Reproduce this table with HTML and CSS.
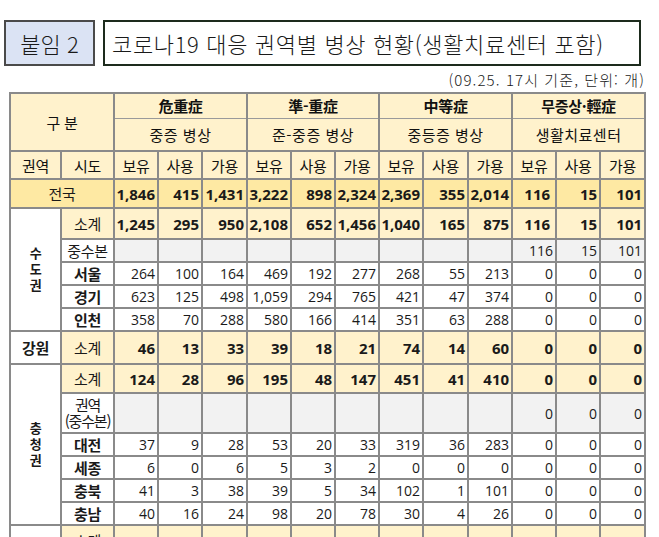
FILE: index.html
```html
<!DOCTYPE html>
<html lang="ko">
<head>
<meta charset="utf-8">
<title>코로나19 대응 권역별 병상 현황</title>
<link rel="stylesheet" href="styles.css">
</head>
<body>
<div class="top">
  <div class="tag">붙임 2</div>
  <div class="title">코로나19 대응 권역별 병상 현황(생활치료센터 포함)</div>
</div>
<div class="unit">(09.25. 17시 기준, 단위: 개)</div>
<table class="beds">
  <colgroup>
    <col class="c-region"><col class="c-sido">
    <col class="c-d"><col class="c-d"><col class="c-d2"><col class="c-d"><col class="c-d"><col class="c-d">
    <col class="c-d"><col class="c-d2"><col class="c-d"><col class="c-d"><col class="c-d"><col class="c-d2">
  </colgroup>
  <thead>
    <tr class="h1">
      <th rowspan="2" colspan="2" class="gubun">구 분</th>
      <th colspan="3" class="hanja">危重症</th>
      <th colspan="3" class="hanja">準-重症</th>
      <th colspan="3" class="hanja">中等症</th>
      <th colspan="3" class="hanja">무증상·輕症</th>
    </tr>
    <tr class="h2">
      <th colspan="3" class="sub">중증 병상</th>
      <th colspan="3" class="sub">준-중증 병상</th>
      <th colspan="3" class="sub">중등증 병상</th>
      <th colspan="3" class="sub">생활치료센터</th>
    </tr>
    <tr class="h3">
      <th>권역</th><th>시도</th>
      <th>보유</th><th>사용</th><th>가용</th>
      <th>보유</th><th>사용</th><th>가용</th>
      <th>보유</th><th>사용</th><th>가용</th>
      <th>보유</th><th>사용</th><th>가용</th>
    </tr>
  </thead>
  <tbody>
    <tr class="total">
      <td colspan="2" class="lbl">전국</td>
      <td>1,846</td><td>415</td><td>1,431</td><td>3,222</td><td>898</td><td>2,324</td><td>2,369</td><td>355</td><td>2,014</td><td class="ctr">116</td><td>15</td><td>101</td>
    </tr>
    <tr class="sum r31">
      <td rowspan="5" class="region"><span class="vert">수<br>도<br>권</span></td>
      <td class="lbl">소계</td>
      <td>1,245</td><td>295</td><td>950</td><td>2,108</td><td>652</td><td>1,456</td><td>1,040</td><td>165</td><td>875</td><td class="ctr">116</td><td>15</td><td>101</td>
    </tr>
    <tr class="hq r23">
      <td class="lbl plain">중수본</td>
      <td></td><td></td><td></td><td></td><td></td><td></td><td></td><td></td><td></td><td>116</td><td>15</td><td>101</td>
    </tr>
    <tr class="city r22">
      <td class="lbl">서울</td>
      <td>264</td><td>100</td><td>164</td><td>469</td><td>192</td><td>277</td><td>268</td><td>55</td><td>213</td><td>0</td><td>0</td><td>0</td>
    </tr>
    <tr class="city r23">
      <td class="lbl">경기</td>
      <td>623</td><td>125</td><td>498</td><td>1,059</td><td>294</td><td>765</td><td>421</td><td>47</td><td>374</td><td>0</td><td>0</td><td>0</td>
    </tr>
    <tr class="city r22">
      <td class="lbl">인천</td>
      <td>358</td><td>70</td><td>288</td><td>580</td><td>166</td><td>414</td><td>351</td><td>63</td><td>288</td><td>0</td><td>0</td><td>0</td>
    </tr>
    <tr class="sum r33">
      <td class="region">강원</td>
      <td class="lbl">소계</td>
      <td>46</td><td>13</td><td>33</td><td>39</td><td>18</td><td>21</td><td>74</td><td>14</td><td>60</td><td>0</td><td>0</td><td>0</td>
    </tr>
    <tr class="sum r29">
      <td rowspan="6" class="region"><span class="vert">충<br>청<br>권</span></td>
      <td class="lbl">소계</td>
      <td>124</td><td>28</td><td>96</td><td>195</td><td>48</td><td>147</td><td>451</td><td>41</td><td>410</td><td>0</td><td>0</td><td>0</td>
    </tr>
    <tr class="hq r40">
      <td class="lbl plain two">권역<br>(중수본)</td>
      <td></td><td></td><td></td><td></td><td></td><td></td><td></td><td></td><td></td><td>0</td><td>0</td><td>0</td>
    </tr>
    <tr class="city r23">
      <td class="lbl">대전</td>
      <td>37</td><td>9</td><td>28</td><td>53</td><td>20</td><td>33</td><td>319</td><td>36</td><td>283</td><td>0</td><td>0</td><td>0</td>
    </tr>
    <tr class="city r23">
      <td class="lbl">세종</td>
      <td>6</td><td>0</td><td>6</td><td>5</td><td>3</td><td>2</td><td>0</td><td>0</td><td>0</td><td>0</td><td>0</td><td>0</td>
    </tr>
    <tr class="city r22">
      <td class="lbl">충북</td>
      <td>41</td><td>3</td><td>38</td><td>39</td><td>5</td><td>34</td><td>102</td><td>1</td><td>101</td><td>0</td><td>0</td><td>0</td>
    </tr>
    <tr class="city r23">
      <td class="lbl">충남</td>
      <td>40</td><td>16</td><td>24</td><td>98</td><td>20</td><td>78</td><td>30</td><td>4</td><td>26</td><td>0</td><td>0</td><td>0</td>
    </tr>
    <tr class="sum r31">
      <td class="region"></td>
      <td class="lbl">소계</td>
      <td>170</td><td>30</td><td>140</td><td>269</td><td>78</td><td>191</td><td>340</td><td>53</td><td>287</td><td>0</td><td>0</td><td>0</td>
    </tr>
  </tbody>
</table>
</body>
</html>
```
FILE: styles.css
```css
html, body {
  margin: 0;
  padding: 0;
  background: #ffffff;
  color: #111111;
  font-family: "Noto Sans CJK KR", "Noto Sans", sans-serif;
}

.top {
  display: flex;
  gap: 8px;
  margin: 20px 0 0 4px;
}

.tag,
.title {
  height: 46px;
  box-sizing: border-box;
  display: flex;
  align-items: center;
  font-size: 22px;
  font-weight: 300;
  color: #1a1a1a;
}

.tag {
  width: 91px;
  justify-content: center;
  background: #dbe3f4;
  border: 2px solid #4a4a4a;
}

.title {
  width: 538px;
  padding-left: 7px;
  background: #ffffff;
  border: 2px solid #1d2b1d;
  letter-spacing: 0.65px;
}

.unit {
  width: 645px;
  height: 20px;
  margin-top: 4px;
  text-align: right;
  font-size: 15px;
  line-height: 20px;
  font-weight: 300;
  letter-spacing: 1.1px;
  color: #1a1a1a;
}

.beds {
  margin: 2px 0 0 9px;
  border-collapse: collapse;
  table-layout: fixed;
  width: 637px;
  border: 2px solid #8a8a8a;
}

.c-region { width: 51px; }
.c-sido { width: 53px; }
.c-d { width: 44px; }
.c-d2 { width: 45px; }

.beds th,
.beds td {
  border: 2px solid #8a8a8a;
  padding: 0;
  overflow: hidden;
  white-space: nowrap;
}

.beds th {
  background: #fff2cc;
  font-size: 15px;
  font-weight: 400;
  letter-spacing: -0.3px;
  text-align: center;
}

.h1 { height: 25px; }
.h2 { height: 33px; }
.h3 { height: 28px; }

.h1 th.hanja {
  border-bottom: 1px solid #9a9a9a;
  font-weight: 700;
}
.h2 th.sub {
  border-top: 1px solid #9a9a9a;
  letter-spacing: 0.5px;
}

.gubun { letter-spacing: 1px; }

.beds td {
  text-align: right;
  padding-right: 2px;
  font-family: "Open Sans", "Noto Sans CJK KR", sans-serif;
  font-size: 14px;
  font-weight: 400;
  color: #1a1a1a;
}

.beds td.lbl,
.beds td.region {
  text-align: center;
  padding-right: 0;
  font-family: "Noto Sans CJK KR", sans-serif;
  font-size: 15px;
  letter-spacing: -0.3px;
}

.beds td.region {
  background: #ffffff;
  font-weight: 700;
}

.vert {
  display: inline-block;
  line-height: 16px;
  font-size: 13px;
  white-space: normal;
}

.total { height: 29px; }
.total td {
  background: #fee9a3;
  font-weight: 700;
  font-size: 15px;
}
.total td.lbl { font-weight: 400; }

.sum td {
  background: #fff2cc;
  font-weight: 700;
  font-size: 15px;
}
.sum td.lbl { font-weight: 400; }
.sum td.region { background: #ffffff; font-weight: 700; }

td.ctr { padding-right: 5px; }

.hq td {
  background: #f2f2f2;
}
.hq td.lbl { background: #ffffff; }
.hq td.two {
  font-size: 15px;
  line-height: 16px;
  letter-spacing: -1.2px;
}

.city td.lbl { font-weight: 700; }

.r22 { height: 22px; }
.r23 { height: 23px; }
.r29 { height: 29px; }
.r31 { height: 31px; }
.r33 { height: 33px; }
.r40 { height: 40px; }
```
